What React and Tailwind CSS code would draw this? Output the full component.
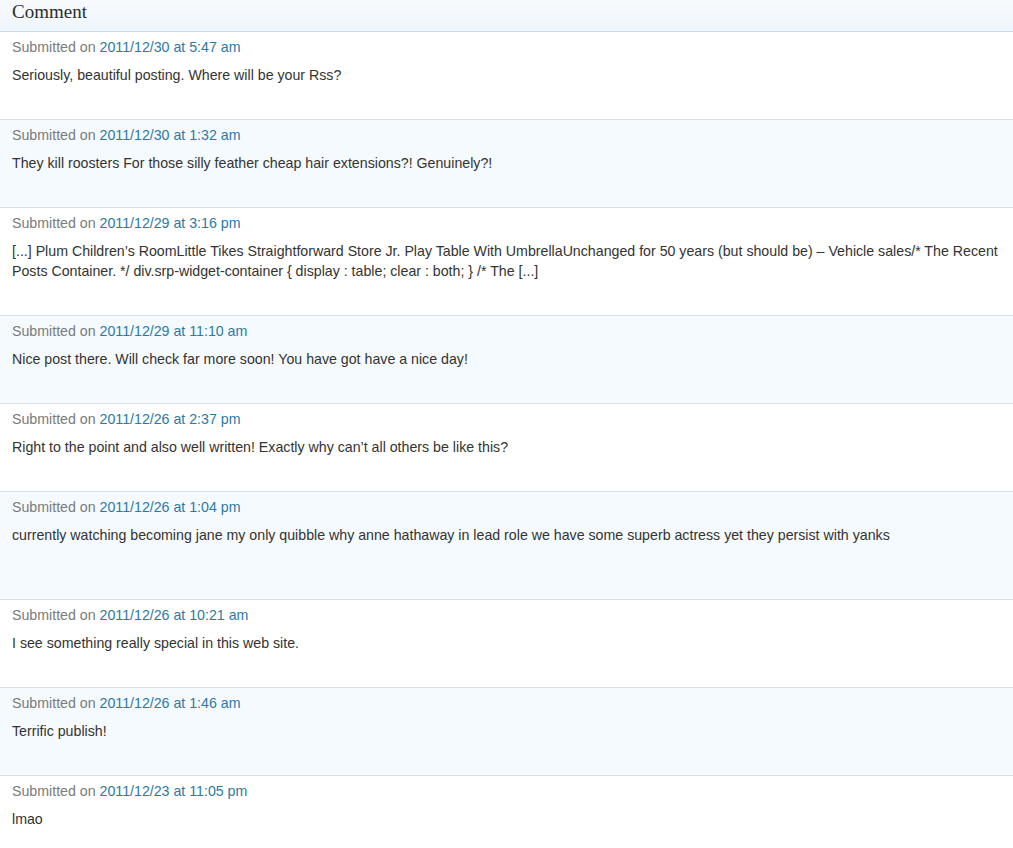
import React from "react";

const COMMENTS = [
  { date: "2011/12/30 at 5:47 am", text: "Seriously, beautiful posting. Where will be your Rss?" },
  { date: "2011/12/30 at 1:32 am", text: "They kill roosters For those silly feather cheap hair extensions?! Genuinely?!" },
  {
    date: "2011/12/29 at 3:16 pm",
    text: "[...] Plum Children’s RoomLittle Tikes Straightforward Store Jr. Play Table With UmbrellaUnchanged for 50 years (but should be) – Vehicle sales/* The Recent Posts Container. */ div.srp-widget-container { display : table; clear : both; } /* The [...]",
    tall: true,
  },
  { date: "2011/12/29 at 11:10 am", text: "Nice post there. Will check far more soon! You have got have a nice day!" },
  { date: "2011/12/26 at 2:37 pm", text: "Right to the point and also well written! Exactly why can’t all others be like this?" },
  {
    date: "2011/12/26 at 1:04 pm",
    text: "currently watching becoming jane my only quibble why anne hathaway in lead role we have some superb actress yet they persist with yanks",
    tall: true,
  },
  { date: "2011/12/26 at 10:21 am", text: "I see something really special in this web site." },
  { date: "2011/12/26 at 1:46 am", text: "Terrific publish!" },
  { date: "2011/12/23 at 11:05 pm", text: "lmao" },
];

const CommentRow = ({ comment, index }) => {
  const bg = index % 2 === 1 ? "bg-[#f5faff]" : "bg-white";
  return (
    <div className={`${bg} border-b border-[#d9dee3] pl-3 pr-2 pt-[5px] pb-[34px]`}>
      <p className="text-[14.2px] leading-5 text-[#7a7a7a]">
        Submitted on <span className="text-[#2b7aa6]">{comment.date}</span>
      </p>
      <p className={`mt-2 text-[14.2px] leading-5 text-[#333] ${comment.tall ? "min-h-[40px]" : ""}`}>
        {comment.text}
      </p>
    </div>
  );
};

export default function App() {
  return (
    <div className="w-[1013px] min-h-[848px] bg-white font-['Liberation_Sans',Arial,sans-serif]">
      <div className="h-[32px] border-b border-[#cfdbe6] bg-gradient-to-b from-[#f8fbfe] to-[#eef5fc] px-3">
        <h2 className="font-['Liberation_Serif','DejaVu_Serif',serif] text-[19px] leading-6 text-[#2d2d2d]">
          Comment
        </h2>
      </div>
      {COMMENTS.map((comment, index) => (
        <CommentRow key={comment.date} comment={comment} index={index} />
      ))}
    </div>
  );
}
